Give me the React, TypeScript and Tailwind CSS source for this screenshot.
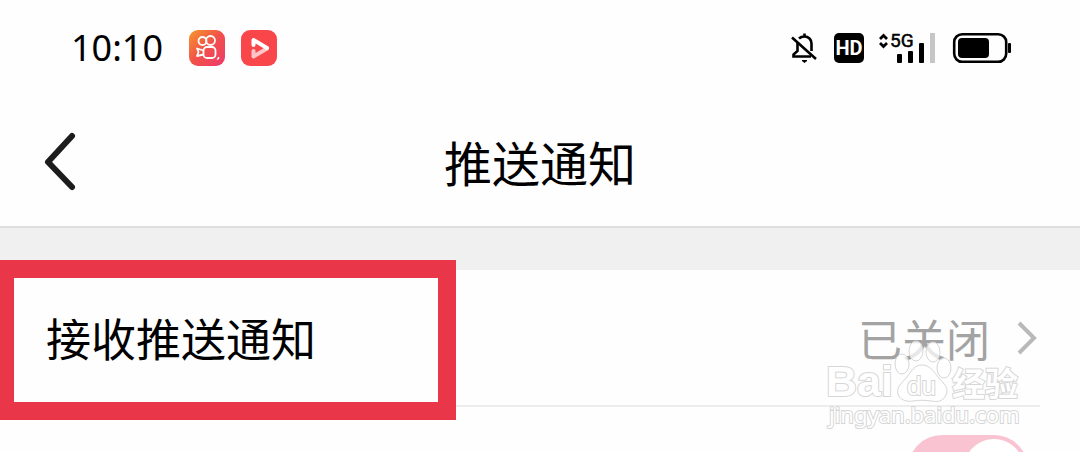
import { useState } from 'react'

function AppBadges() {
  return (
    <div className="flex items-center gap-4">
      <svg className="w-9 h-9" viewBox="0 0 36 36" fill="none" aria-hidden="true">
        <defs>
          <linearGradient id="camera-bg" x1="0" y1="0" x2="1" y2="1">
            <stop offset="0" stopColor="#f5972c" />
            <stop offset="0.5" stopColor="#f2504a" />
            <stop offset="1" stopColor="#ec3a6a" />
          </linearGradient>
        </defs>
        <rect width="36" height="36" rx="9" fill="url(#camera-bg)" />
        <g stroke="#fff" strokeWidth="1.8" strokeLinejoin="round">
          <circle cx="13.500" cy="11" r="4" />
          <circle cx="21.500" cy="10.500" r="4.500" />
          <rect x="14.500" y="17" width="12" height="11" rx="3.500" />
          <path d="M14.500 20.500 8 18.500l1.500 3.500L8 26l6.500-1.500" />
          <path d="M29.500 27v1.500l-1.500 1" strokeWidth="1.500" />
        </g>
      </svg>
      <svg className="w-9 h-9" viewBox="0 0 36 36" aria-hidden="true">
        <rect width="36" height="36" rx="9" fill="#f9464b" />
        <path d="M12.500 21v5.500L26 18.500" fill="none" stroke="#ffc4c7" strokeWidth="4" strokeLinecap="round" strokeLinejoin="round" />
        <path d="M12.500 15v-5L26 18" fill="none" stroke="#fff" strokeWidth="4" strokeLinecap="round" strokeLinejoin="round" />
      </svg>
    </div>
  )
}

function StatusIcons() {
  return (
    <div className="flex items-center">
      {/* Muted bell */}
      <svg className="w-7 h-8 mr-4" viewBox="0 0 28 32" fill="none" stroke="#000" strokeWidth="2.600" aria-hidden="true">
        <path d="M9 6.500C10.500 5 12 4.500 14.500 4.500c4 0 7 3 7 7V19" />
        <path d="M7.500 11V19L3.500 22.500V24.500H21" />
        <path d="M14.500 1.500v3M2 5.500 26 27" />
        <path d="M12 28.500h5l-2.500 2Z" fill="#000" strokeWidth="1" />
      </svg>
      <span className="w-[30px] h-[30px] mr-[14px] flex items-center justify-center rounded-[5px] bg-black text-white text-[20px] leading-none font-bold font-['Roboto',sans-serif]">
        HD
      </span>
      {/* Mobile signal */}
      <svg className="w-[58px] h-8 mr-4 overflow-visible" viewBox="0 0 58 32" aria-hidden="true">
        <path d="M2 7 5.500 3.500 9 7M2 11 5.500 14.500 9 11" fill="none" stroke="#000" strokeWidth="2.800" />
        <text x="12" y="15" fontSize="19" stroke="#000" strokeWidth="0.5" fontFamily="Roboto, sans-serif">5G</text>
        <rect x="19" y="22" width="5" height="9" rx="1" />
        <rect x="30" y="19" width="5" height="12" rx="1" />
        <rect x="41" y="11" width="5" height="20" rx="1" />
        <rect x="52" y="1" width="5" height="30" fill="#c6c6c6" />
      </svg>
      {/* Battery */}
      <svg className="w-[60px] h-8" viewBox="0 0 60 32" aria-hidden="true">
        <rect x="2.200" y="2.200" width="52" height="27.600" rx="8" fill="none" stroke="#000" strokeWidth="2.600" />
        <rect x="6" y="6" width="31" height="20" rx="4" />
        <rect x="56" y="11" width="3" height="10" rx="1" />
      </svg>
    </div>
  )
}

function Watermark() {
  return (
    <svg
      className="absolute right-14 top-[66px] w-[200px] h-[92px] overflow-visible pointer-events-none"
      viewBox="0 0 200 92"
      fill="#fff"
      stroke="#d6d6d6"
      aria-hidden="true"
    >
      <text x="2" y="60" fontSize="43" fontWeight="700" fontFamily="Liberation Sans, sans-serif" strokeWidth="2" paintOrder="stroke">
        Bai
      </text>
      <g fillOpacity="0.750">
        <ellipse cx="78" cy="28" rx="7" ry="10" />
        <ellipse cx="92" cy="15" rx="7" ry="10" />
        <ellipse cx="109" cy="16" rx="7" ry="10" />
        <ellipse cx="120" cy="32" rx="7" ry="10" />
      </g>
      <path d="M98 29c8 0 12 7 17 13 6 7 10 10 7 17-3 7-9 7-15 6-7-1-11-1-18 0-7 1-13-1-15-7-2-7 4-11 9-17 4-5 7-12 15-12Z" />
      <text x="83" y="59" fontSize="26" fontWeight="400" fontFamily="Liberation Sans, sans-serif" strokeWidth="2" paintOrder="stroke">
        du
      </text>
      <text x="128" y="60" fontSize="33" fontWeight="700" fontFamily="Noto Sans CJK SC, sans-serif" strokeWidth="2" paintOrder="stroke">
        经验
      </text>
      <text x="5" y="87" fontSize="22" fontFamily="Noto Sans, sans-serif" fontWeight="400" strokeWidth="2" paintOrder="stroke">
        jingyan.baidu.com
      </text>
    </svg>
  )
}

export default function App() {
  const [enabled, setEnabled] = useState(true)

  return (
    <div className="h-screen overflow-hidden bg-[#fefefe] text-black font-['Noto_Sans_CJK_SC',sans-serif]">
      {/* Status bar */}
      <div className="h-24 pl-[71px] pr-[68px] flex items-center justify-between">
        <div className="flex items-center gap-[26px]">
          <time className="text-[36px] leading-none font-['Noto_Sans',sans-serif]">10:10</time>
          <AppBadges />
        </div>
        <StatusIcons />
      </div>

      {/* Title bar */}
      <header className="h-[132px] px-10 grid grid-cols-[1fr_auto_1fr] items-center border-b-2 border-[#dedede]">
        <button type="button" aria-label="返回" className="w-10 h-16">
          <svg className="w-10 h-16" viewBox="0 0 40 64" fill="none" stroke="#1c1c1c" strokeWidth="6" strokeLinecap="round" strokeLinejoin="round">
            <path d="M32 7 8 33l24 25" />
          </svg>
        </button>
        <h1 className="text-[48px] leading-none font-normal">推送通知</h1>
      </header>

      <div className="h-[42px] bg-[#f0f0f0]" />

      <main>
        <div className="relative">
          <a href="#receive" className="h-[137px] ml-[46px] mr-10 flex items-center justify-between border-b-2 border-[#ededed] text-[45px] leading-none">
            <span>接收推送通知</span>
            <span className="flex items-center gap-[26px] text-[44px] text-[#a3a3a3]">
              已关闭
              <svg className="w-6 h-9" viewBox="0 0 24 36" fill="none" stroke="#b9b9b9" strokeWidth="4" aria-hidden="true">
                <path d="M3 3 18 18 3 33" />
              </svg>
            </span>
          </a>
          {/* Highlight frame */}
          <div className="absolute left-0 -top-[10px] w-[456px] h-[160px] border-[18px] border-l-[14px] border-[#e93648] pointer-events-none" />
          <Watermark />
        </div>

        <div className="pt-7 pr-[52px] flex justify-end">
          <label className="relative block w-[120px] h-[68px]">
            <input
              type="checkbox"
              role="switch"
              aria-label="通知开关"
              checked={enabled}
              onChange={e => setEnabled(e.target.checked)}
              className="peer appearance-none block w-full h-full rounded-full bg-gray-200 checked:bg-[#fac3d1]"
            />
            <span className="absolute left-1 top-1 w-[60px] h-[60px] rounded-full bg-white pointer-events-none peer-checked:left-14" />
          </label>
        </div>
      </main>
    </div>
  )
}
